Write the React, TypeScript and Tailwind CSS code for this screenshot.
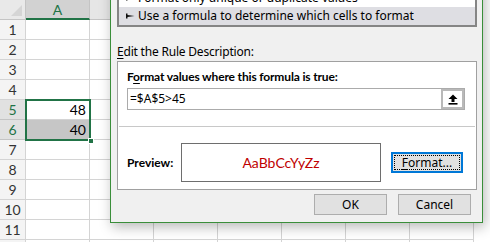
import React from "react";

const COLS = ["A", "B", "C", "D", "E", "F", "G"];
const ROWS = [1, 2, 3, 4, 5, 6, 7, 8, 9, 10, 11, 12];

function ListArrow() {
  return (
    <svg width="9" height="6" viewBox="0 0 9 6" className="shrink-0">
      <path d="M0 0.5 H1.5 V2 L8.5 3 L1.5 4 V5.5 H0 Z" fill="#111" />
    </svg>
  );
}

function UpArrow() {
  return (
    <svg width="10" height="11" viewBox="0 0 10 11">
      <path d="M5 0.5 L9.5 5 H6.5 V8 H3.5 V5 H0.5 Z" fill="#000" />
      <rect x="0.5" y="9" width="9" height="1.6" fill="#000" />
    </svg>
  );
}

export default function App() {
  return (
    <div
      className="relative w-[490px] h-[242px] overflow-hidden bg-white"
      style={{ fontFamily: "'Noto Sans', sans-serif" }}
    >
      {/* column header */}
      <div className="flex h-[20px]">
        <div className="relative w-[26px] shrink-0 bg-[#e9e9e9] border-r border-b border-[#c4c4c4]">
          <div className="absolute right-[3px] bottom-[3px] w-0 h-0 border-l-[11px] border-l-transparent border-b-[11px] border-b-[#d5d5d5]" />
        </div>
        {COLS.map((c) =>
          c === "A" ? (
            <div
              key={c}
              className="w-[64px] shrink-0 bg-[#d2d2d2] border-r border-[#c4c4c4] border-b-2 border-b-[#217346] text-[#217346] flex items-center justify-center text-[14px]"
              style={{ fontFamily: "Lato, sans-serif" }}
            >
              {c}
            </div>
          ) : (
            <div
              key={c}
              className="w-[64px] shrink-0 bg-[#e6e6e6] border-r border-b border-[#c4c4c4]"
            />
          )
        )}
      </div>

      {/* rows */}
      {ROWS.map((r) => {
        const sel = r === 5 || r === 6;
        return (
          <div key={r} className="flex h-[20px]">
            <div
              className={
                sel
                  ? "w-[26px] shrink-0 bg-[#e1e1e1] border-r border-b border-[#c4c4c4] text-[#217346] flex items-center justify-center text-[14px]"
                  : "w-[26px] shrink-0 bg-[#f4f4f4] border-r border-b border-[#d4d4d4] text-[#333] flex items-center justify-center text-[14px]"
              }
              style={{ fontFamily: "Lato, sans-serif" }}
            >
              {r < 12 ? r : ""}
            </div>
            {COLS.map((c) => (
              <div
                key={c}
                className={
                  c === "A" && r === 6
                    ? "w-[64px] shrink-0 bg-[#c6c6c6] border-r border-b border-[#d4d4d4] flex items-center justify-end pr-[3px] text-[14px] text-black"
                    : "w-[64px] shrink-0 bg-white border-r border-b border-[#d4d4d4] flex items-center justify-end pr-[3px] text-[14px] text-black"
                }
                style={{ fontFamily: "Lato, sans-serif" }}
              >
                {c === "A" && r === 5 ? "48" : c === "A" && r === 6 ? "40" : ""}
              </div>
            ))}
          </div>
        );
      })}

      {/* selection border */}
      <div className="absolute left-[25px] top-[99px] w-[66px] h-[42px] border-2 border-[#217346]" />
      <div className="absolute left-[88px] top-[138px] w-[6px] h-[6px] bg-[#217346] border border-white" />

      {/* dialog */}
      <div className="absolute left-[110px] top-[-30px] w-[373px] h-[253px] bg-[#f0f0f0] border border-[#3a8e3a] shadow-[2px_4px_12px_rgba(0,0,0,0.28)] flex flex-col pl-[6px] pr-[5px] text-[12px] text-black">
        {/* listbox */}
        <div className="h-[56px] border-2 border-[#858585] bg-white flex flex-col justify-end overflow-hidden">
          <div className="h-[18px] shrink-0 flex items-center pl-[7px] gap-[3px]">
            <ListArrow />
            <span>Format only unique or duplicate values</span>
          </div>
          <div className="h-[18px] shrink-0 flex items-center pl-[7px] gap-[3px] bg-[#dedee3]">
            <ListArrow />
            <span>Use a formula to determine which cells to format</span>
          </div>
        </div>

        <div className="mt-[17px] h-[16px] leading-[16px] tracking-[-0.2px]">
          <span className="underline underline-offset-2">E</span>dit the Rule Description:
        </div>

        {/* description panel */}
        <div className="mt-[1px] h-[129px] border border-[#a0a0a0] bg-white flex flex-col">
          <div
            className="pl-[9px] pt-[7px] h-[23px] leading-[16px] font-bold text-[12px] tracking-[-0.15px]"
            style={{ fontFamily: "Lato, sans-serif" }}
          >
            F<span className="underline underline-offset-2">o</span>rmat values where this formula is true:
          </div>
          <div className="ml-[9px] mt-[3px] w-[338px] h-[22px] border border-[#ababab] bg-white flex items-center">
            <div className="flex-1 pl-[2px] leading-[20px]">=$A$5&gt;45</div>
            <div className="w-[23px] h-[20px] border-2 border-[#b9b9b9] bg-white flex items-center justify-center">
              <UpArrow />
            </div>
          </div>
          <div className="mx-[1px] mt-[16px] h-px bg-[#c8c8c8]" />
          <div className="mt-[16px] pl-[9px] flex items-center">
            <div
              className="w-[54px] font-bold text-[12px]"
              style={{ fontFamily: "Lato, sans-serif" }}
            >
              Preview:
            </div>
            <div
              className="w-[200px] h-[39px] border border-[#6e6e6e] bg-white flex items-center justify-center text-[#c00000] text-[14px]"
              style={{ fontFamily: "Lato, sans-serif" }}
            >
              AaBbCcYyZz
            </div>
            <div className="ml-[10px] w-[72px] h-[21px] border-2 border-[#0078d7] bg-[#e1e1e1] p-px">
              <div className="w-full h-full border border-dotted border-black flex items-center justify-center leading-none">
                <span>
                  <span className="underline underline-offset-2">F</span>ormat...
                </span>
              </div>
            </div>
          </div>
        </div>

        {/* buttons */}
        <div className="mt-[4px] flex justify-end gap-[11px] pr-[6px]">
          <div className="w-[73px] h-[21px] border border-[#adadad] bg-[#e1e1e1] flex items-center justify-center">
            OK
          </div>
          <div className="w-[73px] h-[21px] border border-[#adadad] bg-[#e1e1e1] flex items-center justify-center">
            Cancel
          </div>
        </div>
      </div>
    </div>
  );
}
